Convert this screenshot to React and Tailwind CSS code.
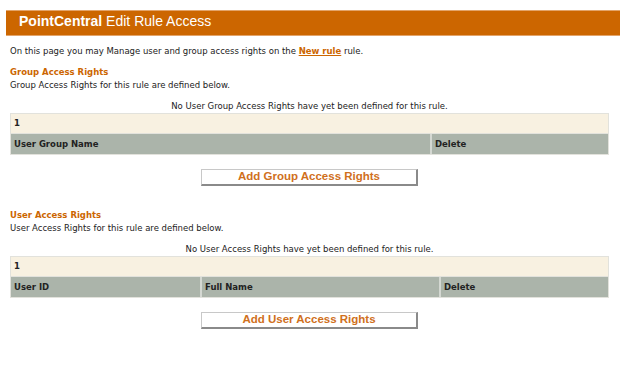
import React from "react";

const verdana = { fontFamily: '"DejaVu Sans", Verdana, sans-serif' };

const AccessTable = ({ columns }) => {
  return (
    <div className="w-[599px] border border-[#e2e2dc] bg-white">
      <div className="h-[20px] bg-[#f8f1e1] border-b border-[#e2e2dc] flex items-center pl-[3px] text-[8.5px] font-bold text-[#222]">
        1
      </div>
      <div className="flex h-[20px] bg-[#abb4aa]">
        {columns.map((col, i) => (
          <div
            key={col.label}
            className={`flex items-center pl-[3px] text-[8.5px] font-bold text-[#222] ${
              i > 0 ? "border-l-2 border-[#d4d8d2]" : ""
            }`}
            style={{ width: col.width }}
          >
            {col.label}
          </div>
        ))}
      </div>
    </div>
  );
};

const AddButton = ({ label }) => (
  <div className="w-[599px] flex justify-center">
    <button
      className="w-[217px] h-[17px] bg-white border-t border-l border-[#c8c8c8] border-r-2 border-b-2 border-r-[#8a8a8a] border-b-[#8a8a8a] text-[#d0701c] font-bold text-[11.5px] leading-none flex items-center justify-center"
      style={{ fontFamily: '"Liberation Sans", Arial, sans-serif' }}
    >
      {label}
    </button>
  </div>
);

export default function App() {
  return (
    <div className="w-[628px] h-[368px] bg-white pt-[10px] text-[#222]" style={verdana}>
      <div className="ml-[6px] w-[614px] h-[26px] bg-[#cc6600] border-y border-[#e3a46a] pl-[13px] pt-[2px]">
        <div
          className="text-white text-[14px] leading-[16px]"
          style={{ fontFamily: '"Liberation Sans", Arial, sans-serif' }}
        >
          <span className="font-bold">PointCentral</span> Edit Rule Access
        </div>
      </div>

      <div className="px-[10px]">
        <div className="mt-[9px] text-[8.5px] leading-[12px]">
          On this page you may Manage user and group access rights on the{" "}
          <span className="text-[#cc6600] font-bold underline">New rule</span> rule.
        </div>

        <div className="mt-[9px] text-[8.5px] leading-[12px] font-bold text-[#cc6600]">
          Group Access Rights
        </div>
        <div className="mt-[1px] text-[8.5px] leading-[12px]">
          Group Access Rights for this rule are defined below.
        </div>
        <div className="mt-[9px] w-[599px] text-center text-[8.5px] leading-[12px]">
          No User Group Access Rights have yet been defined for this rule.
        </div>
        <div className="mt-[1px]">
          <AccessTable
            columns={[
              { label: "User Group Name", width: 419 },
              { label: "Delete", width: 178 },
            ]}
          />
        </div>
        <div className="mt-[14px]">
          <AddButton label="Add Group Access Rights" />
        </div>

        <div className="mt-[23px] text-[8.5px] leading-[12px] font-bold text-[#cc6600]">
          User Access Rights
        </div>
        <div className="mt-[1px] text-[8.5px] leading-[12px]">
          User Access Rights for this rule are defined below.
        </div>
        <div className="mt-[9px] w-[599px] text-center text-[8.5px] leading-[12px]">
          No User Access Rights have yet been defined for this rule.
        </div>
        <div className="mt-[1px]">
          <AccessTable
            columns={[
              { label: "User ID", width: 189 },
              { label: "Full Name", width: 239 },
              { label: "Delete", width: 169 },
            ]}
          />
        </div>
        <div className="mt-[14px]">
          <AddButton label="Add User Access Rights" />
        </div>
      </div>
    </div>
  );
}
